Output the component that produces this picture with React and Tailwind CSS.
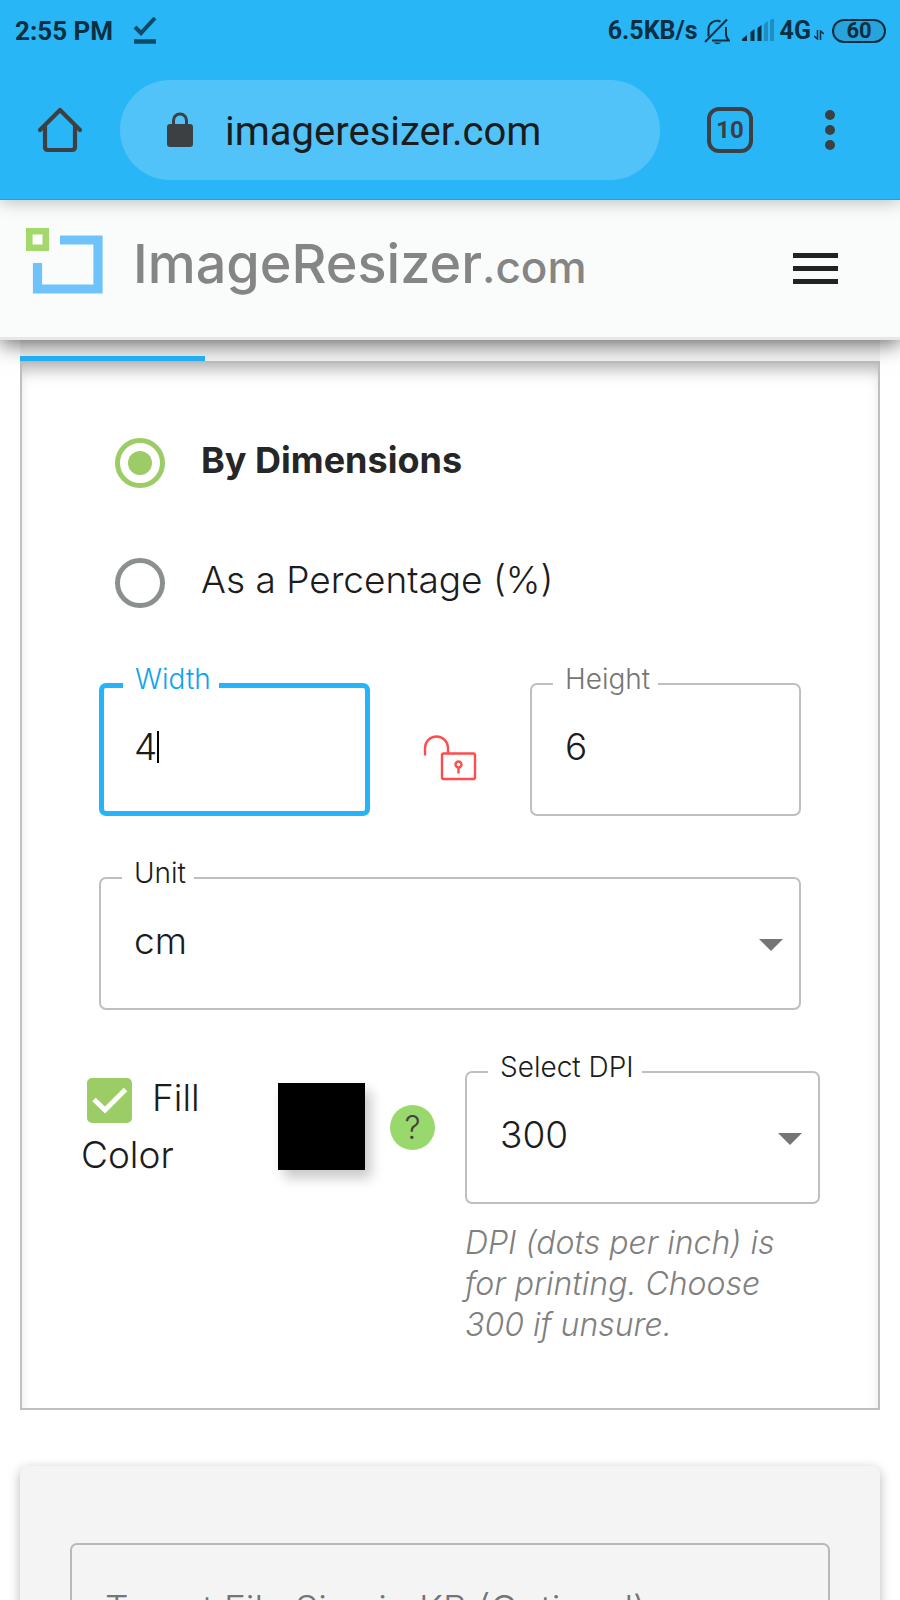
import React, { useState } from "react";

function StatusBar() {
  return (
    <div className="flex h-[60px] items-center justify-between pl-[15px] pr-[14px] pt-[2px] font-[Roboto,sans-serif] font-bold text-[#0b2f40]">
      <div className="flex items-center gap-5">
        <span className="text-[26px] leading-8">2:55 PM</span>
        <svg className="h-[28px] w-[24px]" viewBox="0 0 24 28" fill="none" stroke="#0f4a66">
          <path d="M2 10l6 6L22 1" strokeWidth="4" />
          <path d="M1 24.500h22" strokeWidth="4.500" />
        </svg>
      </div>
      <div className="flex items-center">
        <span className="text-[25px] leading-8">6.5KB/s</span>
        <svg className="ml-[6px] h-[27px] w-[26px]" viewBox="0 0 26 27" fill="none" stroke="#0b2f40" strokeWidth="2">
          <path d="M4.500 18.500V11a8.500 8.500 0 0 1 12-7.500M8 22.500h17c-2-2-3-3.500-3-6V9" />
          <path d="M1 24L23 1.500" />
          <path d="M9.500 24.500h8q-4 3.500-8 0z" fill="#0b2f40" stroke="none" />
        </svg>
        <svg className="ml-3 h-[24px] w-[32px]" viewBox="0 0 32 24" fill="#0b2f40">
          <path d="M0 22v-2l5-4v6zM8.500 13l4-3v12h-4zM15.500 9l4-3v16h-4z" />
          <path d="M22 5l4-3v20h-4zM28 1l4-2v23h-4z" opacity=".3" />
        </svg>
        <span className="ml-[6px] text-[25px] leading-8">4G</span>
        <svg className="ml-[3px] mt-2 h-[10px] w-[10px]" viewBox="0 0 10 10" fill="none" stroke="#0b2f40" strokeWidth="1.500">
          <path d="M0 6l3.500 3V0M10 4L6.500 1v9" />
        </svg>
        <div className="ml-2 flex h-[24px] w-[54px] items-center justify-center rounded-full border-2 border-[#0b2f40] bg-[#29a3dc] text-[22px] leading-5">
          60
        </div>
      </div>
    </div>
  );
}

function BrowserBar() {
  return (
    <div className="flex h-[140px] items-center border-b border-[#14a5ec] pl-[36px] pr-[64px]">
      <button aria-label="Home" className="shrink-0">
        <svg className="size-[48px]" viewBox="0 0 48 48" fill="none" stroke="#3c4043" strokeWidth="4.200" strokeLinecap="round" strokeLinejoin="round">
          <path d="M4 24L24 4l20 20" />
          <path d="M9 21v20q0 3 3 3h24q3 0 3-3V21" />
        </svg>
      </button>
      <div className="ml-[36px] flex h-[100px] flex-1 items-center rounded-full bg-[#51c3f9] pl-[47px]">
        <svg className="h-[35px] w-[26px] shrink-0" viewBox="0 0 26 35" fill="none">
          <path d="M6.500 13V8.500a6.500 6.500 0 0 1 13 0V13" stroke="#3c4043" strokeWidth="3" />
          <rect y="12" width="26" height="23" rx="3" fill="#3c4043" />
        </svg>
        <input
          aria-label="Address"
          defaultValue="imageresizer.com"
          className="ml-8 w-0 flex-1 bg-transparent pt-1 font-[Roboto,sans-serif] text-[40px] font-normal leading-[48px] text-[#1c1c1c] outline-none"
        />
      </div>
      <button
        aria-label="Tabs"
        className="ml-[47px] flex size-[46px] items-center justify-center rounded-[12px] border-[4px] border-[#3c4043] font-[Roboto,sans-serif] text-[24px] font-bold leading-6 text-[#3c4043]"
      >
        10
      </button>
      <button aria-label="More" className="ml-[71px]">
        <svg className="h-[42px] w-[12px]" viewBox="0 0 12 42" fill="#3c4043">
          <circle cx="6" cy="6" r="5" />
          <circle cx="6" cy="21" r="5" />
          <circle cx="6" cy="36" r="5" />
        </svg>
      </button>
    </div>
  );
}

function SiteHeader() {
  return (
    <header className="relative z-10 flex h-[140px] items-center border-b-[3px] border-[#e6e8e7] bg-[#fafcfb] pl-[26px] pr-[62px] shadow-[0_4px_20px_rgba(0,0,0,0.6)]">
      <a href="#home" className="flex items-center gap-[30px] pb-[6px] text-[#858585]">
        <svg className="mb-[10px] h-[66px] w-[77px]" viewBox="0 0 77 66" fill="none">
          <path d="M3.300 3.300h16.500v16.500h-16.500z" fill="#fff" stroke="#a3d96c" strokeWidth="6.600" />
          <path d="M34 12h38v49H11.500V35" stroke="#6ec3fb" strokeWidth="9.200" />
        </svg>
        <span className="text-[54px] font-medium leading-[60px]">
          ImageResizer<span className="text-[44px]">.com</span>
        </span>
      </a>
      <button aria-label="Menu" className="ml-auto flex w-[45px] flex-col gap-2">
        <span className="h-[5px] bg-[#222]" />
        <span className="h-[5px] bg-[#222]" />
        <span className="h-[5px] bg-[#222]" />
      </button>
    </header>
  );
}

function Field({ id, label, active, labelClass, className, children }) {
  return (
    <div
      className={
        "relative h-[133px] rounded-[7px] " +
        (active ? "border-[5px] border-[#26b4f8] " : "border-2 border-[#bfbfbf] ") +
        (className || "")
      }
    >
      <label
        htmlFor={id}
        className={
          "absolute bg-white pl-3 pr-2 text-[28px] leading-[30px] " +
          (active ? "-top-[24px] left-[19px] " : "-top-[21px] left-[21px] ") +
          labelClass
        }
      >
        {label}
      </label>
      {children}
    </div>
  );
}

function SelectBox({ id, options, value, onChange }) {
  return (
    <div className="grid h-full items-center">
      <select
        id={id}
        value={value}
        onChange={(e) => onChange(e.target.value)}
        className="col-start-1 row-start-1 h-full w-full appearance-none bg-transparent pb-[6px] pl-[33px] pr-12 text-[37px] text-[#1c1c1c] outline-none"
      >
        {options.map((o) => (
          <option key={o}>{o}</option>
        ))}
      </select>
      <svg className="pointer-events-none col-start-1 row-start-1 mr-4 mt-[2px] h-[12px] w-[24px] justify-self-end" viewBox="0 0 24 12" fill="#757575">
        <path d="M0 0h24L12 12z" />
      </svg>
    </div>
  );
}

const radioClass =
  "size-[50px] shrink-0 appearance-none rounded-full border-[5px] border-[#8b8f90] bg-clip-content p-2 checked:border-[#9ccc65] checked:bg-[#9ccc65]";

function ModeRadio({ value, mode, setMode, children }) {
  return (
    <label className="flex items-center gap-[36px]">
      <input type="radio" name="mode" className={radioClass} checked={mode === value} onChange={() => setMode(value)} />
      <span className={"pb-[6px] leading-10 " + (mode === value ? "text-[36px] font-bold text-[#262626]" : "text-[37px] text-[#1c1c1c]")}>
        {children}
      </span>
    </label>
  );
}

export default function App() {
  const [mode, setMode] = useState("dimensions");
  const [width, setWidth] = useState("4");
  const [height, setHeight] = useState("6");
  const [unit, setUnit] = useState("cm");
  const [dpi, setDpi] = useState("300");
  const [fill, setFill] = useState(true);

  return (
    <div className="flex h-screen flex-col overflow-hidden bg-white font-[Inter,sans-serif] font-light text-[#1c1c1c]">
      <div className="relative z-20 shrink-0 bg-[#29b6f6] shadow-[0_2px_16px_rgba(0,0,0,0.25)]">
        <StatusBar />
        <BrowserBar />
      </div>
      <div className="shrink-0">
        <SiteHeader />
      </div>
      <main className="min-h-0 flex-1 overflow-hidden px-5">
        <div className="h-[21px] bg-[#f4f4f4] pt-4">
          <div className="relative z-10 h-[5px] w-[185px] bg-[#22aef2]" />
        </div>
        <form className="border-2 border-[#bfbfbf] pb-[63px] pt-[75px] shadow-[inset_0_14px_16px_-7px_rgba(0,0,0,0.28)]">
          <div className="flex flex-col gap-[70px] pl-[93px]">
            <ModeRadio value="dimensions" mode={mode} setMode={setMode}>By Dimensions</ModeRadio>
            <ModeRadio value="percent" mode={mode} setMode={setMode}>As a Percentage (%)</ModeRadio>
          </div>

          <div className="mt-[75px] flex items-center justify-between px-[77px]">
            <Field id="width" label="Width" active labelClass="text-[#0fa3ee]" className="w-[271px]">
              <div className="flex h-full items-center pb-[6px] pl-[30px]">
                <input
                  id="width"
                  value={width}
                  onChange={(e) => setWidth(e.target.value)}
                  className="bg-transparent text-[37px] leading-10 caret-transparent outline-none [field-sizing:content]"
                />
                <span className="h-8 w-[2px] bg-black" />
              </div>
            </Field>
            <button type="button" aria-label="Unlock aspect ratio" className="pt-4">
              <svg className="h-[46px] w-[54px]" viewBox="0 0 54 46" fill="none" stroke="#ff4d4d" strokeWidth="2.400">
                <path d="M2 20.500V13a11.500 11.500 0 0 1 23 0v5" />
                <rect x="19" y="18.500" width="33" height="25.500" rx="1.500" />
                <circle cx="35.500" cy="29.500" r="3" />
                <path d="M35.500 32.500v6" />
              </svg>
            </button>
            <Field id="height" label="Height" labelClass="text-[#757575]" className="w-[271px]">
              <input
                id="height"
                value={height}
                onChange={(e) => setHeight(e.target.value)}
                className="h-full w-full bg-transparent pb-[6px] pl-[33px] text-[37px] outline-none"
              />
            </Field>
          </div>

          <div className="mt-[61px] px-[77px]">
            <Field id="unit" label="Unit" labelClass="">
              <SelectBox id="unit" value={unit} onChange={setUnit} options={["cm", "mm", "inch", "px"]} />
            </Field>
          </div>

          <div className="mt-[61px] flex items-start pl-[59px] pr-[58px]">
            <label className="-mt-[2px] w-[150px] text-[37px] leading-[57px]">
              <span className="ml-[6px] mr-[20px] inline-grid size-[45px] align-middle">
                <input
                  type="checkbox"
                  checked={fill}
                  onChange={(e) => setFill(e.target.checked)}
                  className="peer col-start-1 row-start-1 size-[45px] appearance-none rounded-[5px] border-4 border-[#8b8f90] checked:border-[#9ccc65] checked:bg-[#9ccc65]"
                />
                <svg className="pointer-events-none col-start-1 row-start-1 size-[45px] opacity-0 peer-checked:opacity-100" viewBox="0 0 45 45" fill="none" stroke="#fff" strokeWidth="5">
                  <path d="M7 21.500L18 32 38.500 11.500" />
                </svg>
              </span>
              Fill Color
            </label>
            <button type="button" aria-label="Fill color" className="ml-[47px] mt-3 size-[87px] shrink-0 bg-black shadow-[6px_8px_12px_rgba(0,0,0,0.22)]" />
            <button type="button" aria-label="Help" className="ml-[25px] mt-[34px] size-[45px] shrink-0 rounded-full bg-[#99d86c] text-[32px] leading-[45px] text-[#444]">
              ?
            </button>
            <div className="ml-[30px] flex-1">
              <Field id="dpi" label="Select DPI" labelClass="">
                <SelectBox id="dpi" value={dpi} onChange={setDpi} options={["300", "150", "72"]} />
              </Field>
              <p className="pr-6 pt-[18px] text-[32px] italic leading-[41px] text-[#808080]">
                DPI (dots per inch) is for printing. Choose 300 if unsure.
              </p>
            </div>
          </div>
        </form>

        <section className="mt-14 rounded-[8px] bg-[#f4f4f4] px-[50px] pb-20 pt-[77px] shadow-[0_3px_12px_rgba(0,0,0,0.28)]">
          <input
            aria-label="Target File Size in KB (Optional)"
            placeholder="Target File Size in KB (Optional)"
            className="h-[133px] w-full rounded-[7px] border-2 border-[#b9b9b9] bg-transparent pb-[2px] pl-[33px] text-[37px] outline-none placeholder:text-[#757575]"
          />
        </section>
      </main>
    </div>
  );
}
